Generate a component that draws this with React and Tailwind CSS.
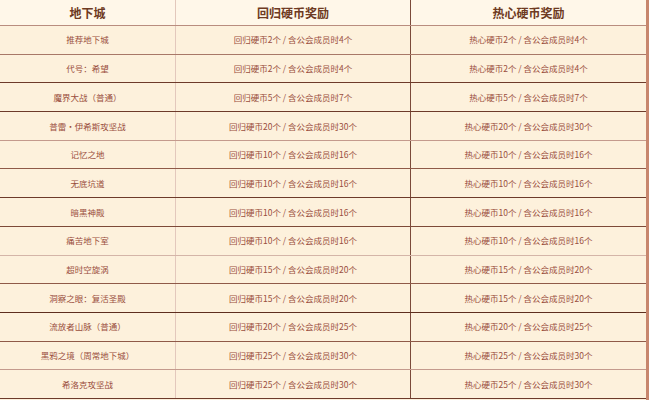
const rows = [
  { name: '推荐地下城', a: 2, b: 4, line: 'border-[#a87868]' },
  { name: '代号：希望', a: 2, b: 4, line: 'border-[#6d3b2a]' },
  { name: '魔界大战（普通）', a: 5, b: 7, line: 'border-[#6d3b2a]' },
  { name: '普雷·伊希斯攻坚战', a: 20, b: 30, line: 'border-[#c49a8d]' },
  { name: '记忆之地', a: 10, b: 16, line: 'border-[#8f5a48]' },
  { name: '无底坑道', a: 10, b: 16, line: 'border-[#6d3b2a]' },
  { name: '暗黑神殿', a: 10, b: 16, line: 'border-[#7d4a38]' },
  { name: '痛苦地下室', a: 10, b: 16, line: 'border-[#d4b5a8]' },
  { name: '超时空旋涡', a: 15, b: 20, line: 'border-[#8f5a48]' },
  { name: '洞察之眼：复活圣殿', a: 15, b: 20, line: 'border-[#5e2e1e]' },
  { name: '流放者山脉（普通）', a: 20, b: 25, line: 'border-[#8f5a48]' },
  { name: '黑鸦之境（周常地下城）', a: 25, b: 30, line: 'border-[#c49a8d]' },
  { name: '希洛克攻坚战', a: 25, b: 30, line: 'border-[#6d3b2a]' },
]

export default function App() {
  return (
    <div className="w-[649px] h-[400px] overflow-hidden bg-[#fdf1dc] flex" style={{ fontFamily: '"Noto Sans CJK SC", "Noto Sans", sans-serif' }}>
      <div className="w-[646px] flex flex-col">
        {/* Header */}
        <div className="flex h-[26px] shrink-0 bg-[#fff7e9] border-b border-[#b98d7f] text-[12px] font-bold text-[#6e3a22]">
          <div className="w-[176px] border-r border-[#e3c8bc] flex items-center justify-center">地下城</div>
          <div className="w-[235px] border-r border-[#7b4a3a] flex items-center justify-center">回归硬币奖励</div>
          <div className="flex-1 flex items-center justify-center">热心硬币奖励</div>
        </div>

        {/* Rows */}
        {rows.map((r) => (
          <div key={r.name} className={`flex h-[28.7px] shrink-0 border-b ${r.line} text-[8.5px] text-[#9a4e3c]`}>
            <div className="w-[176px] border-r border-[#e3c8bc] flex items-center justify-center">{r.name}</div>
            <div className="w-[235px] border-r border-[#7b4a3a] flex items-center justify-center">
              回归硬币{r.a}个 / 含公会成员时{r.b}个
            </div>
            <div className="flex-1 flex items-center justify-center">
              热心硬币{r.a}个 / 含公会成员时{r.b}个
            </div>
          </div>
        ))}
      </div>
      <div className="w-[3px] bg-[#c7866d]" />
    </div>
  )
}
